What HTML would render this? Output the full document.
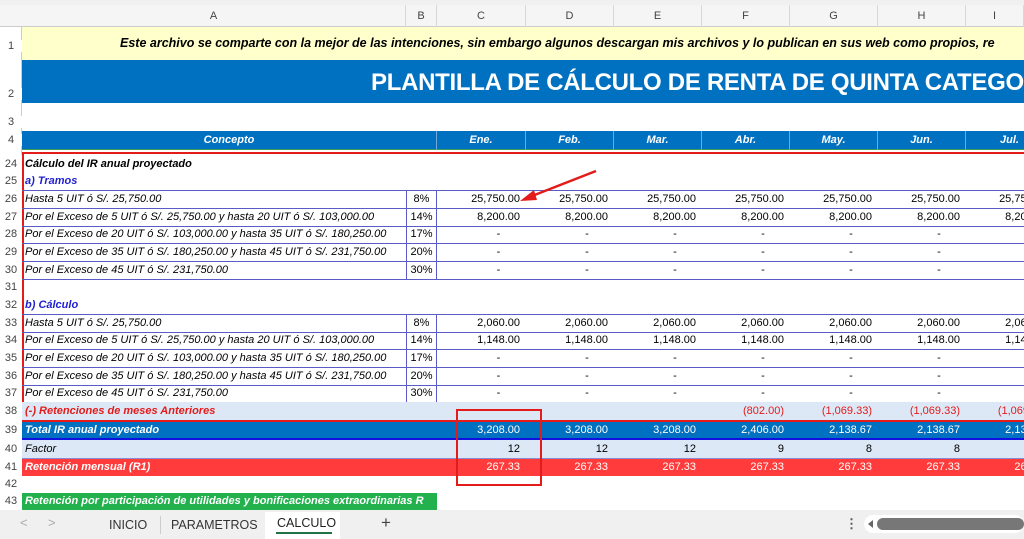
<!DOCTYPE html>
<html><head><meta charset="utf-8"><style>
*{margin:0;padding:0;box-sizing:border-box}
body{width:1024px;height:539px;overflow:hidden;background:#fff;font-family:"Liberation Sans",Arial,sans-serif;position:relative}
.a{position:absolute;white-space:nowrap;overflow:hidden}
.rh{position:absolute;left:0;width:22px;text-align:center;font-size:11px;color:#444;background:#fff}
.ch{position:absolute;top:5px;height:22px;font-size:11px;color:#444;text-align:center;line-height:22px;border-right:1px solid #d8d8d8}
.t{font-size:11px;font-style:italic;color:#000}
.n{font-size:11px;color:#000;text-align:right}
</style></head><body>
<div class="a" style="left:0;top:0;width:1024px;height:5px;background:#f0f0f0"></div>
<div class="a" style="left:0;top:5px;width:1024px;height:22px;background:#f5f5f5;border-bottom:1px solid #ccc"></div>
<div class="ch" style="left:22px;width:384px">A</div>
<div class="ch" style="left:406px;width:31px">B</div>
<div class="ch" style="left:437px;width:89px">C</div>
<div class="ch" style="left:526px;width:88px">D</div>
<div class="ch" style="left:614px;width:88px">E</div>
<div class="ch" style="left:702px;width:88px">F</div>
<div class="ch" style="left:790px;width:88px">G</div>
<div class="ch" style="left:878px;width:88px">H</div>
<div class="ch" style="left:966px;width:58px">I</div>
<div class="a" style="left:0;top:27px;width:22px;height:483px;background:#fff;border-right:1px solid #ccc"></div>

<div class="a" style="left:22px;top:27px;width:1002px;height:33px;background:#ffffcc;font-size:12.5px;font-weight:bold;font-style:italic;line-height:33px;padding-left:98px">Este archivo se comparte con la mejor de las intenciones, sin embargo algunos descargan mis archivos y lo publican en sus web como propios, re</div>
<div class="rh" style="top:40px">1</div>
<div class="a" style="left:22px;top:60px;width:1002px;height:43px;background:#0070c0;color:#fff;font-size:24px;letter-spacing:-0.3px;font-weight:bold;line-height:46px;padding-left:349px">PLANTILLA DE CÁLCULO DE RENTA DE QUINTA CATEGO</div>
<div class="rh" style="top:88px">2</div>
<div class="rh" style="top:116px">3</div>
<div class="a" style="left:22px;top:131px;width:1002px;height:19px;background:#0070c0;border-bottom:1px solid #3a9a5a"></div>
<div class="a" style="left:22px;top:131px;width:415px;height:19px;color:#fff;font-size:11px;font-weight:bold;font-style:italic;text-align:center;line-height:19px;border-right:1px solid #6fa8dc">Concepto</div>
<div class="rh" style="top:134px">4</div>
<div id="mh"></div>

<div class="a" style="left:22px;top:152px;width:1002px;height:2px;background:#e31b1b"></div>
<div class="a" style="left:22px;top:152px;width:2px;height:250px;background:#e31b1b"></div>

<div id="rows"></div>

<div class="a" style="left:456px;top:409px;width:86px;height:77px;border:2px solid #e31b1b;z-index:5"></div>
<svg class="a" style="left:0;top:0;z-index:5" width="1024" height="539"><line x1="596" y1="171" x2="532" y2="196" stroke="#e31b1b" stroke-width="2.5"/><polygon points="520,201 534,190 537,200" fill="#e31b1b"/></svg>

<div class="a" style="left:0;top:510px;width:1024px;height:29px;background:#f0f0f0;font-size:12.5px;color:#333"></div>
<div class="a" style="left:20px;top:515px;font-size:13px;color:#aaa">&lt;</div>
<div class="a" style="left:48px;top:515px;font-size:13px;color:#aaa">&gt;</div>
<div class="a" style="left:109px;top:518px;font-size:12.5px;color:#333">INICIO</div>
<div class="a" style="left:160px;top:516px;width:1px;height:18px;background:#ccc"></div>
<div class="a" style="left:171px;top:518px;font-size:12.5px;color:#333">PARAMETROS</div>
<div class="a" style="left:265px;top:512px;width:75px;height:27px;background:#fff"></div>
<div class="a" style="left:277px;top:516px;font-size:12.5px;color:#222">CALCULO</div>
<div class="a" style="left:276px;top:532px;width:56px;height:2px;background:#217346"></div>
<div class="a" style="left:381px;top:513px;font-size:17px;color:#444">+</div>
<div class="a" style="left:845px;top:516px;font-size:13px;color:#555;font-weight:bold">⋮</div>
<div class="a" style="left:864px;top:515px;width:160px;height:18px;background:#fff;border-radius:9px"></div>
<div class="a" style="left:868px;top:520px;width:0;height:0;border-top:4px solid transparent;border-bottom:4px solid transparent;border-right:5px solid #666"></div>
<div class="a" style="left:877px;top:518px;width:147px;height:12px;background:#777;border-radius:6px"></div>

<script>
var C=[437,526,614,702,790,878,966,1054];
var months=["Ene.","Feb.","Mar.","Abr.","May.","Jun.","Jul."];
var h="";
for(var i=0;i<7;i++)h+='<div class="a" style="left:'+C[i]+'px;top:131px;width:'+(C[i+1]-C[i])+'px;height:19px;color:#fff;font-size:11px;font-weight:bold;font-style:italic;text-align:center;line-height:19px;border-right:1px solid #6fa8dc">'+months[i]+'</div>';
document.getElementById('mh').outerHTML=h;
var tops=[155,173,190,208,226,243,261,279,296,314,332,349,367,385,402,420,440,458,476,493,510];
var nums=[24,25,26,27,28,29,30,31,32,33,34,35,36,37,38,39,40,41,42,43];
var d='-';
function rep(v,n){var a=[];for(var i=0;i<n;i++)a.push(v);return a}
var R={
24:{t:'Cálculo del IR anual proyectado',s:'font-weight:bold'},
25:{t:'a) Tramos',s:'font-weight:bold;color:#1f1fd0'},
26:{t:'Hasta 5 UIT ó S/. 25,750.00',p:'8%',v:rep('25,750.00',7),g:1},
27:{t:'Por el Exceso de 5 UIT ó S/. 25,750.00 y hasta 20 UIT ó S/. 103,000.00',p:'14%',v:rep('8,200.00',7),g:1},
28:{t:'Por el Exceso de 20 UIT ó S/. 103,000.00 y hasta 35 UIT ó S/. 180,250.00',p:'17%',v:rep(d,7),g:1},
29:{t:'Por el Exceso de 35 UIT ó S/. 180,250.00 y hasta 45 UIT ó S/. 231,750.00',p:'20%',v:rep(d,7),g:1},
30:{t:'Por el Exceso de 45 UIT ó S/. 231,750.00',p:'30%',v:rep(d,7),g:1},
32:{t:'b) Cálculo',s:'font-weight:bold;color:#1f1fd0'},
33:{t:'Hasta 5 UIT ó S/. 25,750.00',p:'8%',v:rep('2,060.00',7),g:1},
34:{t:'Por el Exceso de 5 UIT ó S/. 25,750.00 y hasta 20 UIT ó S/. 103,000.00',p:'14%',v:rep('1,148.00',7),g:1},
35:{t:'Por el Exceso de 20 UIT ó S/. 103,000.00 y hasta 35 UIT ó S/. 180,250.00',p:'17%',v:rep(d,7),g:1},
36:{t:'Por el Exceso de 35 UIT ó S/. 180,250.00 y hasta 45 UIT ó S/. 231,750.00',p:'20%',v:rep(d,7),g:1},
37:{t:'Por el Exceso de 45 UIT ó S/. 231,750.00',p:'30%',v:rep(d,7),g:1},
38:{t:'(-) Retenciones de meses Anteriores',s:'font-weight:bold;color:#e31b1b',bg:'#dce8f5',v:['','','','(802.00)','(1,069.33)','(1,069.33)','(1,069.33)'],vc:'#e31b1b'},
39:{t:'Total IR anual proyectado',s:'font-weight:bold;color:#fff',bg:'#0070c0',v:['3,208.00','3,208.00','3,208.00','2,406.00','2,138.67','2,138.67','2,138.67'],vc:'#fff'},
40:{t:'Factor',bg:'#dce8f5',v:['12','12','12','9','8','8','8']},
41:{t:'Retención mensual (R1)',s:'font-weight:bold;color:#fff',bg:'#ff3b3b',v:rep('267.33',7),vc:'#fff'},
43:{t:'Retención por participación de utilidades y bonificaciones extraordinarias R',s:'font-weight:bold;color:#fff',bg2:'#22b14c'}
};
var o="";
for(var k=0;k<nums.length;k++){
 var n=nums[k],y=tops[k],hh=tops[k+1]-y,r=R[n]||{};
 o+='<div class="rh" style="top:'+y+'px;height:'+hh+'px;line-height:'+hh+'px">'+n+'</div>';
 if(r.bg)o+='<div class="a" style="left:22px;top:'+y+'px;width:1002px;height:'+hh+'px;background:'+r.bg+'"></div>';
 if(r.bg2)o+='<div class="a" style="left:22px;top:'+y+'px;width:415px;height:'+hh+'px;background:'+r.bg2+'"></div>';
 if(n==39)o+='<div class="a" style="left:22px;top:'+(y+hh-2)+'px;width:1002px;height:2px;background:#1010e0"></div><div class="a" style="left:22px;top:'+y+'px;width:1002px;height:2px;background:#e31b1b"></div>';
 if(n==41)o+='<div class="a" style="left:22px;top:'+y+'px;width:1002px;height:1px;background:#8a8ad0"></div>';
 if(r.g){o+='<div class="a" style="left:22px;top:'+y+'px;width:1002px;height:'+(hh+1)+'px;border-top:1px solid #5b5bc8;border-bottom:1px solid #5b5bc8"></div>';
  o+='<div class="a" style="left:406px;top:'+y+'px;width:31px;height:'+(hh+1)+'px;border-left:1px solid #5b5bc8;border-right:1px solid #5b5bc8;font-size:11px;text-align:center;line-height:'+hh+'px">'+r.p+'</div>';}
 if(r.t)o+='<div class="a t" style="left:25px;top:'+y+'px;width:'+(r.g?381:1000)+'px;height:'+hh+'px;line-height:'+hh+'px;'+(r.s||'')+'">'+r.t+'</div>';
 if(r.v)for(var i=0;i<7;i++)o+='<div class="a n" style="left:'+C[i]+'px;top:'+y+'px;width:'+(C[i+1]-C[i]-6)+'px;height:'+hh+'px;line-height:'+hh+'px;'+(r.vc?'color:'+r.vc:'')+';'+(r.v[i]==d?'text-align:center;padding-left:40px':'')+'">'+r.v[i]+'</div>';
}
document.getElementById('rows').outerHTML=o;
</script>
</body></html>
